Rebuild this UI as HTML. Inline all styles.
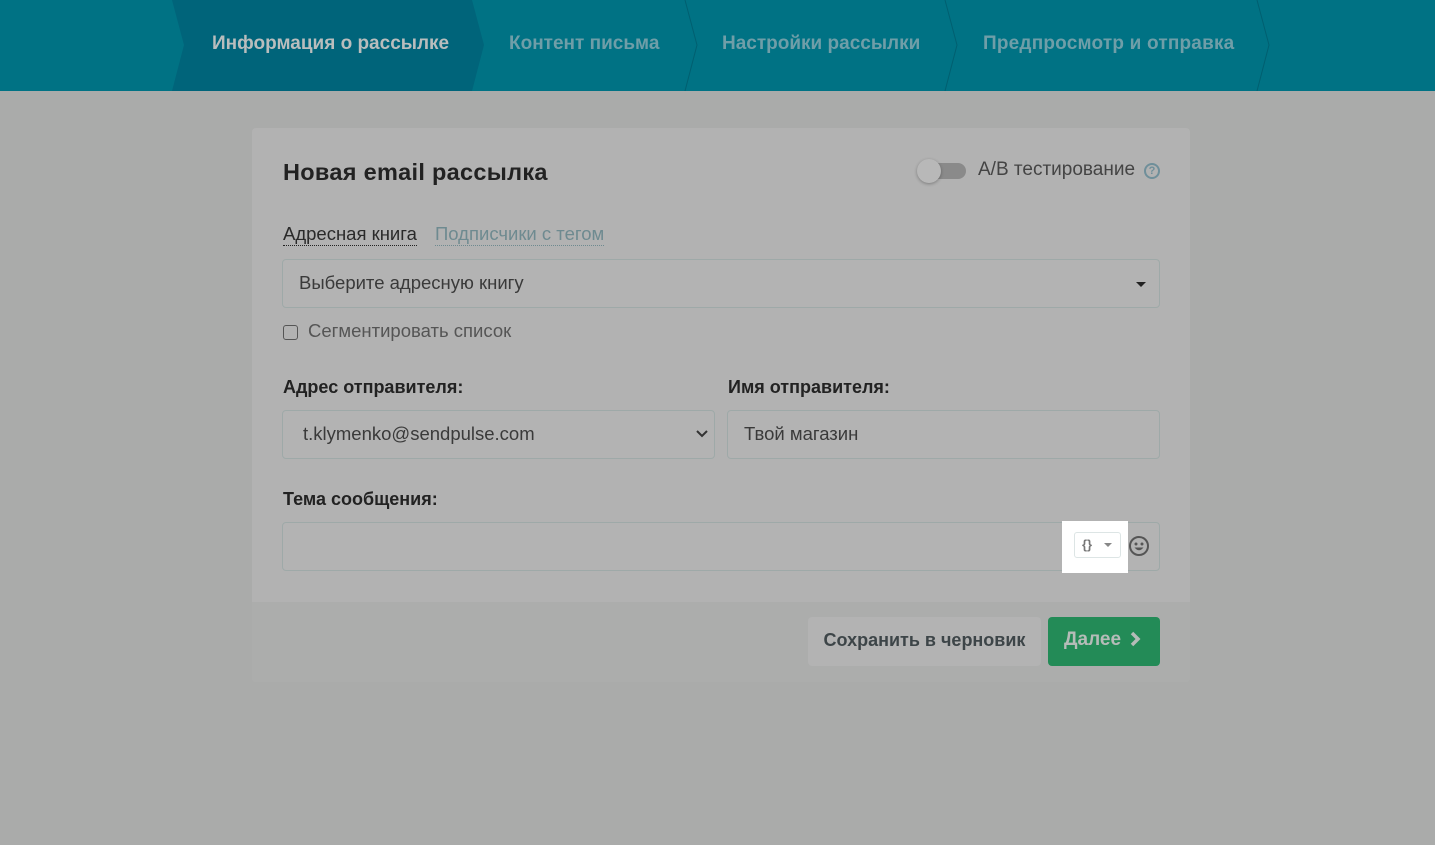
<!DOCTYPE html>
<html><head><meta charset="utf-8"><style>
*{box-sizing:border-box;margin:0;padding:0}
body{width:1435px;height:845px;background:#aaabaa;font-family:"Liberation Sans","Noto Sans CJK SC",sans-serif;position:relative;overflow:hidden;color:#2c2c2c}
.hdr{position:absolute;left:0;top:0;width:1435px;height:91px;background:#007284}
.step{position:absolute;top:0;height:91px;line-height:87px;font-size:19px;font-weight:bold;color:#6f9ea8}
.abs{position:absolute}
.card{position:absolute;left:252px;top:128px;width:938px;height:554px;background:#b2b2b2;border-radius:4px}
.foot{position:absolute;left:252px;top:602px;width:938px;height:80px;background:#acadac;border-radius:0 0 4px 4px}
.inp{position:absolute;border:1px solid #9ea9a8;border-radius:4px;background:#b3b3b3;height:49px;font-size:18.5px;color:#3a3a3a;padding-left:16px;line-height:46px}
.lbl{position:absolute;font-size:18px;font-weight:bold;color:#222}
</style></head><body>
<div class="hdr">
<svg class="abs" style="left:0;top:0" width="1435" height="91">
<polygon points="172,0 472,0 484,45 472,91 172,91 184,45" fill="#00647a"/>
<polyline points="685,0 697,45 685,91" fill="none" stroke="#005f70" stroke-width="1"/>
<polyline points="945,0 957,45 945,91" fill="none" stroke="#005f70" stroke-width="1"/>
<polyline points="1257,0 1269,45 1257,91" fill="none" stroke="#005f70" stroke-width="1"/>
</svg>
<div class="step" style="left:212px;color:#b9bdbd">Информация о рассылке</div>
<div class="step" style="left:509px">Контент письма</div>
<div class="step" style="left:722px">Настройки рассылки</div>
<div class="step" style="left:983px;letter-spacing:0.2px">Предпросмотр и отправка</div>
</div>
<div class="card"></div>
<div class="foot"></div>
<div class="abs" style="left:283px;top:159px;font-size:23.5px;font-weight:bold;color:#222;letter-spacing:0.3px">Новая email рассылка</div>
<div class="abs" style="left:919px;top:163px;width:47px;height:16px;border-radius:8px;background:#8a8a8a"></div>
<div class="abs" style="left:917px;top:159px;width:24px;height:24px;border-radius:12px;background:#b8b8b8;box-shadow:0 1px 3px rgba(0,0,0,.3)"></div>
<div class="abs" style="left:978px;top:159px;font-size:19px;color:#444">A/B тестирование</div>
<div class="abs" style="left:1144px;top:163px;width:16px;height:16px;border:2px solid #6f8f9a;border-radius:50%;font-size:11px;line-height:12px;text-align:center;color:#6f8f9a;font-weight:bold">?</div>
<div class="abs" style="left:283px;top:222px;font-size:18.5px;color:#2a2a2a;border-bottom:1px dotted #222;line-height:23px">Адресная книга</div>
<div class="abs" style="left:435px;top:222px;font-size:18.5px;color:#6e8a90;border-bottom:1px dotted #6e8a90;line-height:23px">Подписчики с тегом</div>
<div class="inp" style="left:282px;top:259px;width:878px">Выберите адресную книгу</div>
<div class="abs" style="left:1136px;top:282px;border:5px solid transparent;border-top-color:#222;border-bottom:0"></div>
<div class="abs" style="left:283px;top:325px;width:15px;height:15px;border:1px solid #555;border-radius:3px"></div>
<div class="abs" style="left:308px;top:320px;font-size:18.5px;color:#555">Сегментировать список</div>
<div class="lbl" style="left:283px;top:377px">Адрес отправителя:</div>
<div class="lbl" style="left:728px;top:377px">Имя отправителя:</div>
<div class="inp" style="left:282px;top:410px;width:433px;padding-left:20px">t.klymenko@sendpulse.com</div>
<svg class="abs" style="left:696px;top:429px" width="12" height="9"><polyline points="1,2 6,7 11,2" fill="none" stroke="#333" stroke-width="2"/></svg>
<div class="inp" style="left:727px;top:410px;width:433px">Твой магазин</div>
<div class="lbl" style="left:283px;top:489px">Тема сообщения:</div>
<div class="inp" style="left:282px;top:522px;width:878px"></div>
<div class="abs" style="left:1062px;top:521px;width:66px;height:52px;background:#fff"></div>
<div class="abs" style="left:1074px;top:532px;width:47px;height:26px;border:1px solid #dde5e5;border-radius:3px;font-size:13px;color:#777;padding-left:7px;line-height:24px;font-weight:bold">{}</div>
<div class="abs" style="left:1104px;top:543px;border:4px solid transparent;border-top-color:#888;border-bottom:0"></div>
<svg class="abs" style="left:1129px;top:536px" width="20" height="20"><circle cx="10" cy="10" r="9" fill="none" stroke="#555" stroke-width="2"/><circle cx="7" cy="8" r="1.5" fill="#555"/><circle cx="13" cy="8" r="1.5" fill="#555"/><path d="M5.5 11.5 Q10 17 14.5 11.5Z" fill="#555"/></svg>
<div class="abs" style="left:808px;top:617px;width:233px;height:49px;background:#b3b3b3;border-radius:4px;font-size:18px;font-weight:bold;color:#3d4548;text-align:center;line-height:46px">Сохранить в черновик</div>
<div class="abs" style="left:1048px;top:617px;width:112px;height:49px;background:#238b57;border-radius:4px;font-size:19px;font-weight:bold;color:#b5bcb8;padding-left:16px;line-height:46px">Далее</div>
<svg class="abs" style="left:1129px;top:631px" width="13" height="16"><polyline points="3,2 9,8 3,14" fill="none" stroke="#b5bcb8" stroke-width="3.5"/></svg>
</body></html>
